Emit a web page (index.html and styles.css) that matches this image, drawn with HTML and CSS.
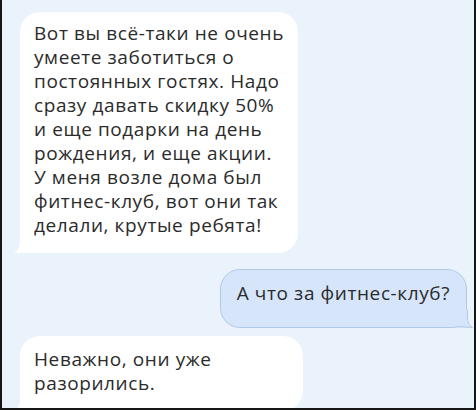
FILE: index.html
```html
<!DOCTYPE html>
<html lang="ru">
<head>
    <meta charset="UTF-8">
    <meta name="viewport" content="width=device-width, initial-scale=1.0">
    <title>Чат</title>
    <link rel="stylesheet" href="styles.css">
</head>
<body>
    <div class="screen">
        <div class="chat">
            <div class="msg msg-in first">
                <p>Вот вы всё-таки не очень<br>умеете заботиться о<br>постоянных гостях. Надо<br>сразу давать скидку 50%<br>и еще подарки на день<br>рождения, и еще акции.<br>У меня возле дома был<br>фитнес-клуб, вот они так<br>делали, крутые ребята!</p>
                <svg class="tail tail-in" width="20" height="18" viewBox="0 0 20 18">
                    <path d="M6 0 L6 7 C6 12 4 15.5 0 18 L20 18 L20 0 Z" fill="#ffffff"/>
                </svg>
            </div>

            <div class="msg msg-out">
                <p>А что за фитнес-клуб?</p>
                <svg class="tail tail-out" width="20" height="18" viewBox="0 0 20 18">
                    <path d="M14 0 L14 7 C14 12 16 15.5 20 18 L0 18 L0 0 Z" fill="#d6e5fa"/>
                    <path d="M14.5 0 L14.5 7 C14.5 12 16 15 19.5 17.5 C14 17.5 10 16.5 6 16.5 L0 17.5" fill="none" stroke="#b3cae6" stroke-width="1"/>
                </svg>
            </div>

            <div class="msg msg-in last">
                <p>Неважно, они уже<br>разорились.</p>
                <svg class="tail tail-in" width="20" height="18" viewBox="0 0 20 18">
                    <path d="M6 0 L6 7 C6 12 4 15.5 0 18 L20 18 L20 0 Z" fill="#ffffff"/>
                </svg>
            </div>
        </div>
    </div>
</body>
</html>
```

FILE: styles.css
```css
body {
    margin: 0;
    padding: 0;
    background: #111;
}

.screen {
    width: 476px;
    height: 410px;
    box-sizing: border-box;
    background-color: #eaf2fc;
    border-left: 2px solid #161616;
    border-right: 2px solid #161616;
    border-bottom: 2px solid #161616;
    overflow: hidden;
    font-family: 'Open Sans', sans-serif;
    color: #2b2b2b;
}

.chat {
    display: flex;
    flex-direction: column;
    padding: 12px 7px 0 18px;
}

.msg {
    position: relative;
    box-sizing: border-box;
    border-radius: 20px;
}

.msg p {
    margin: 0;
    font-size: 19px;
    line-height: 24px;
    letter-spacing: 0.6px;
}

.msg-in {
    align-self: flex-start;
    background-color: #ffffff;
    border-bottom-left-radius: 4px;
    padding: 9px 14px 16px 14px;
}

.msg-out {
    align-self: flex-end;
    background-color: #d6e5fa;
    border: 1px solid #b3cae6;
    border-bottom-right-radius: 4px;
    padding: 11px 16px 22px 16px;
    margin-top: 16px;
}

.msg-in.last {
    min-width: 283px;
    margin-top: 8px;
    padding-top: 11px;
}

.tail {
    position: absolute;
    bottom: 0;
}

.tail-in {
    left: -6px;
}

.tail-out {
    right: -7px;
    bottom: -1px;
}
```
